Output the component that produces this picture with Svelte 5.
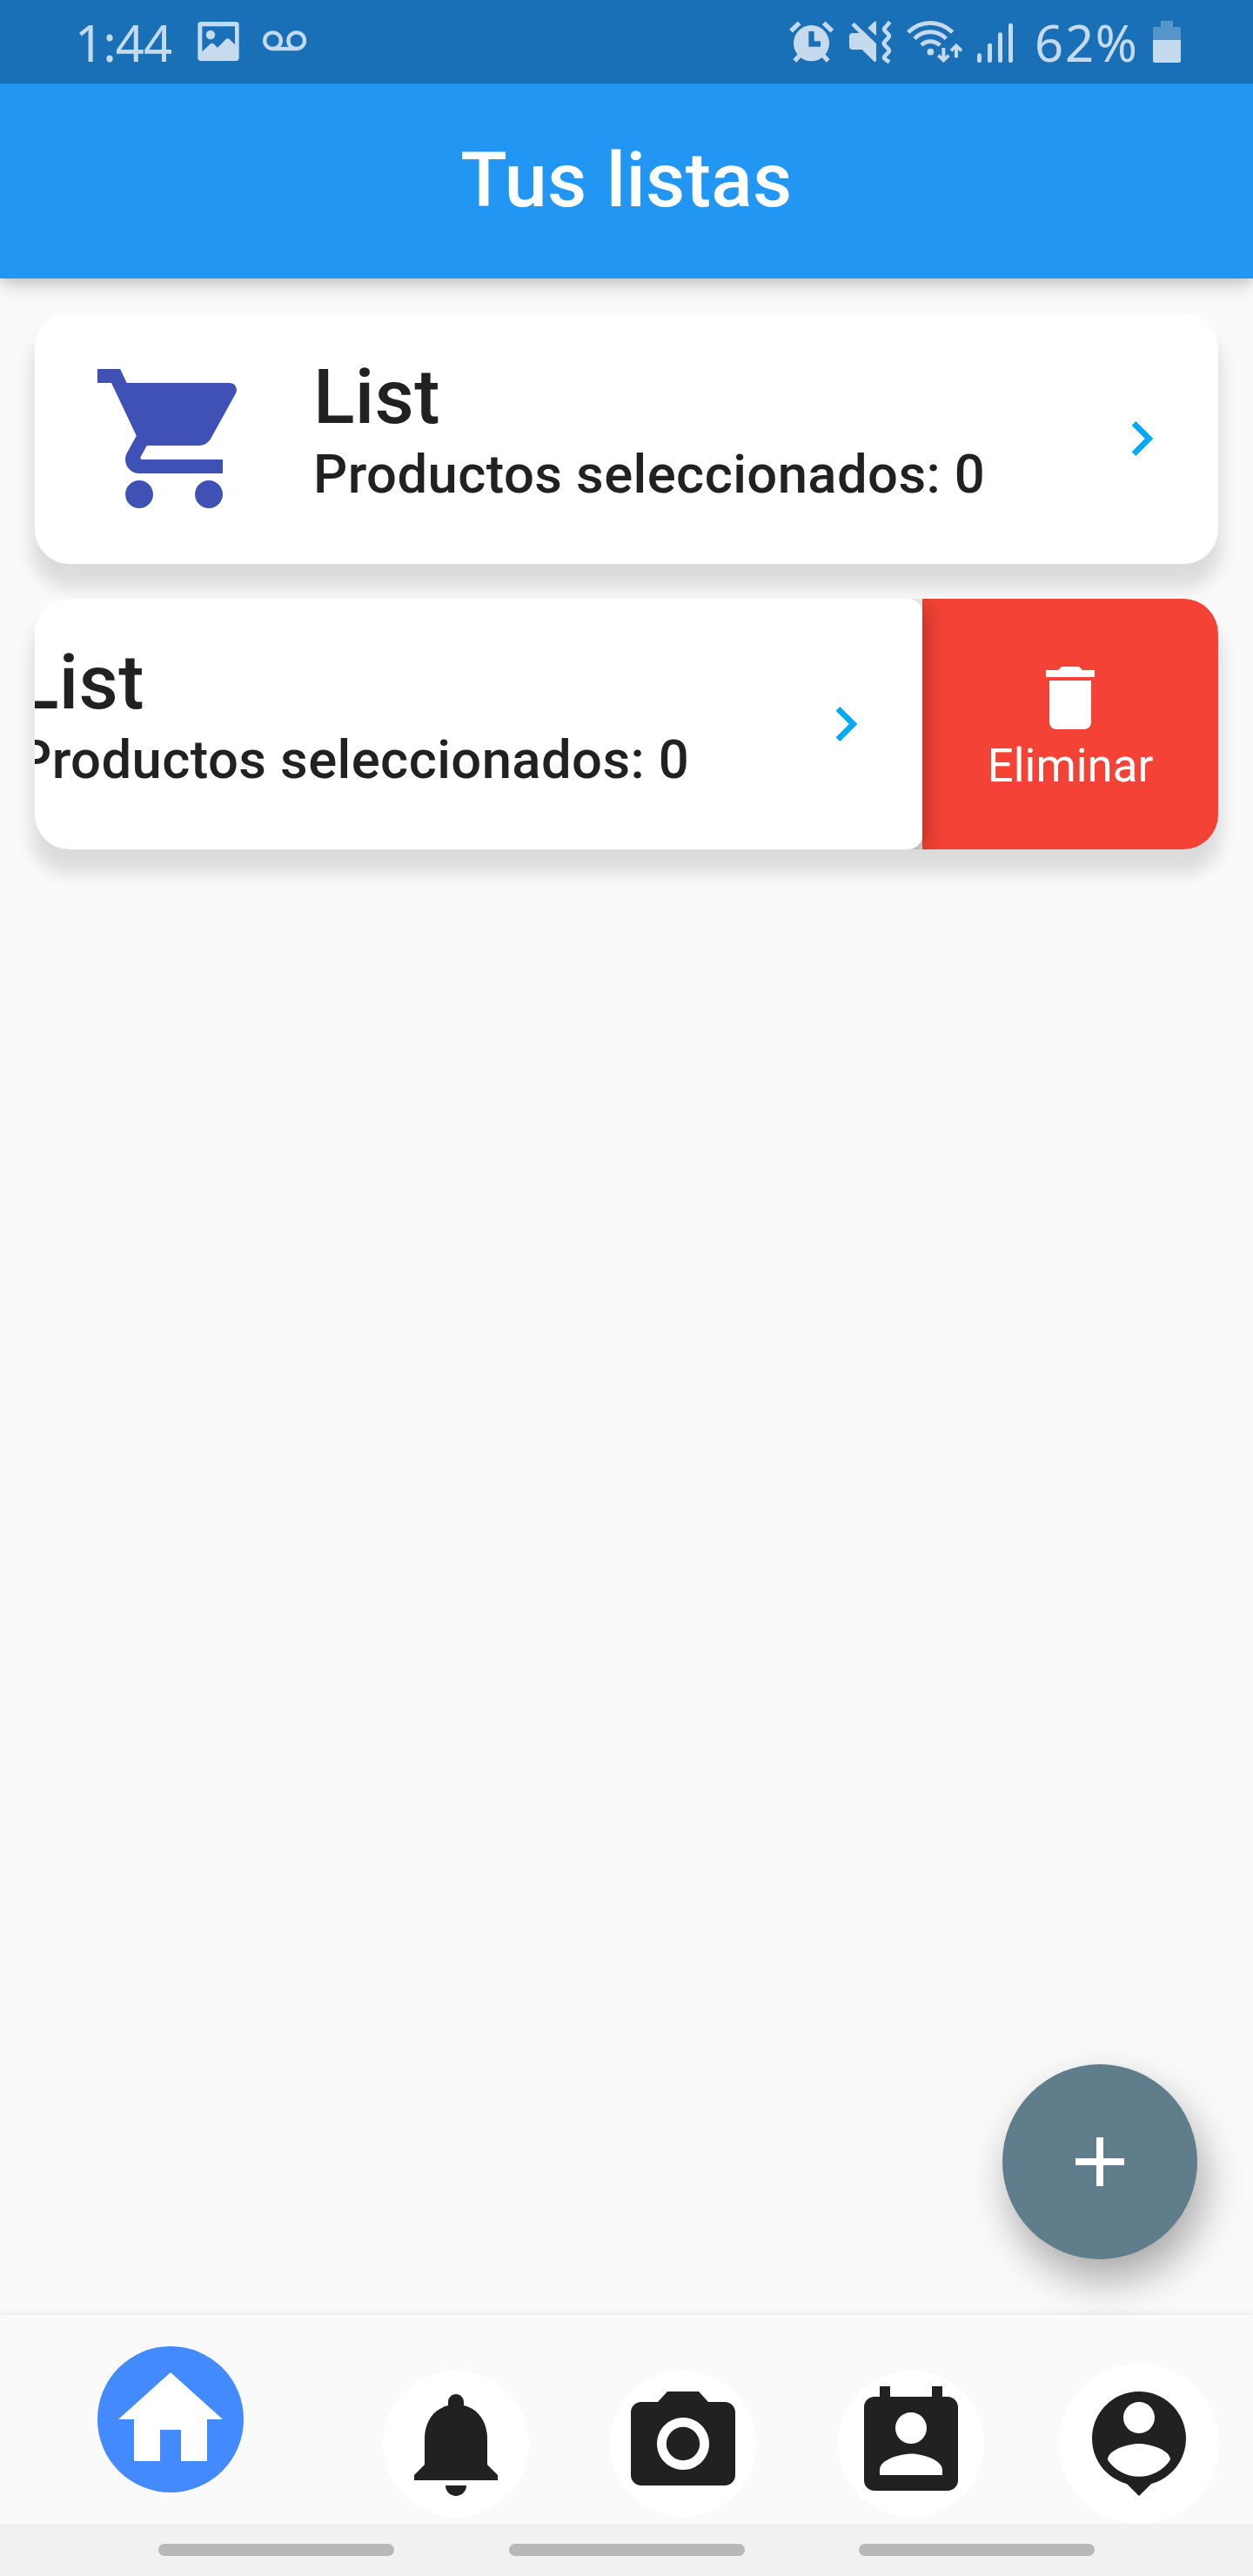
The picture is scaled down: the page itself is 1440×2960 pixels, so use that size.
<script>
  const lists = [
    { name: 'List', selected: 0, open: false },
    { name: 'List', selected: 0, open: true },
  ];

  const tabs = [
    {
      label: 'Notificaciones',
      path: 'M12 22c1.1 0 2-.9 2-2h-4c0 1.1.89 2 2 2zm6-6v-5c0-3.07-1.64-5.64-4.5-6.32V4c0-.83-.67-1.5-1.5-1.5s-1.5.67-1.5 1.5v.68C7.63 5.36 6 7.92 6 11v5l-2 2v1h16v-1l-2-2z',
    },
    {
      label: 'Cámara',
      path: 'M12 8.8a3.2 3.2 0 1 0 0 6.4 3.2 3.2 0 0 0 0-6.4zM9 2L7.17 4H4c-1.1 0-2 .9-2 2v12c0 1.1.9 2 2 2h16c1.1 0 2-.9 2-2V6c0-1.1-.9-2-2-2h-3.17L15 2H9zm3 15c-2.76 0-5-2.24-5-5s2.24-5 5-5 5 2.24 5 5-2.24 5-5 5z',
    },
    {
      label: 'Contactos',
      path: 'M19 3h-1V1h-2v2H8V1H6v2H5c-1.11 0-2 .9-2 2v14c0 1.1.89 2 2 2h14c1.1 0 2-.9 2-2V5c0-1.1-.9-2-2-2zm-7 3c1.66 0 3 1.34 3 3s-1.34 3-3 3-3-1.34-3-3 1.34-3 3-3zm6 12H6v-1c0-2 4-3.1 6-3.1s6 1.1 6 3.1v1z',
    },
    {
      label: 'Perfil',
      large: true,
      path: 'M12 2c-4.97 0-9 4.03-9 9 0 4.17 2.84 7.67 6.69 8.69L12 22l2.31-2.31C18.16 18.67 21 15.17 21 11c0-4.97-4.03-9-9-9zm0 2c1.66 0 3 1.34 3 3s-1.34 3-3 3-3-1.34-3-3 1.34-3 3-3zm0 14.3c-2.5 0-4.71-1.28-6-3.22.03-1.99 4-3.08 6-3.08 1.99 0 5.97 1.09 6 3.08-1.29 1.94-3.5 3.22-6 3.22z',
    },
  ];
</script>

<div class="screen">
  <header class="status">
    <span class="clock">1:44</span>
    <svg class="picture" viewBox="498 0 150 288" aria-hidden="true">
      <path fill-rule="evenodd" d="M513 75h120q11 0 11 11v113q0 11-11 11H513q-11 0-11-11V86q0-11 11-11zm4 16v87l27-26q7-6 14 0l12 12 29-29q6-5 12 0l19 19V91z" />
      <circle cx="546" cy="120" r="15.500" />
    </svg>
    <svg class="voicemail" viewBox="720 0 162 288" aria-hidden="true">
      <g fill="none" stroke="currentColor" stroke-width="13">
        <circle cx="760.500" cy="140" r="28" />
        <circle cx="842" cy="140" r="28" />
        <path d="M760 168h82" />
      </g>
    </svg>
    <span class="spacer"></span>
    <svg class="alarm" viewBox="48 0 162 288" aria-hidden="true">
      <path fill-rule="evenodd" d="M127.500 87a61.500 62 0 1 1 0 124a61.500 62 0 1 1 0-124zM118 108v53h41v-19h-22v-34z" />
      <g stroke="currentColor" stroke-width="16">
        <path d="M57 107l29-28M170 79l29 28M86 192l-16 18M169 192l16 18" />
      </g>
    </svg>
    <svg class="mute" viewBox="255 0 153 288" aria-hidden="true">
      <path d="M275 77l76 73v57q0 8-7 5l-42-41h-33q-11 0-11-11v-34q0-12 12-12h22l-27-27z" />
      <path d="M322 97l22-22q7-4 7 3v45z" />
      <path d="M398 76l-16 19q-6 5-2 10l13 14q5 6-1 12l-12 13q-5 6 0 11l12 13q6 6 1 12l-13 14q-4 5 2 10l14 10" fill="none" stroke="currentColor" stroke-width="14" />
    </svg>
    <svg class="wifi" viewBox="453 0 201 288" aria-hidden="true">
      <g fill="none" stroke="currentColor" stroke-width="14">
        <path d="M461 111Q495 79 537 79T614 111M483 133Q506 110 537 110T592 133M507 156Q519 143 537 143T571 156" />
      </g>
      <circle cx="538" cy="179" r="11.500" />
      <path d="M577 165h12v30l8-8 8 8-22 21-22-21 8-8 8 8zM621 199v-28l-8 8-8-8 22-22 22 22-8 8-8-8v28z" />
    </svg>
    <svg class="signal" viewBox="696 0 129 288" aria-hidden="true">
      <rect x="699" y="184" width="15" height="32" rx="7" />
      <rect x="735" y="149" width="15" height="67" rx="7" />
      <rect x="771" y="112" width="15" height="104" rx="7" />
      <rect x="807" y="80" width="15" height="136" rx="7" />
    </svg>
    <span class="percent">62%</span>
    <svg class="battery" viewBox="1302 0 102 288" aria-hidden="true">
      <path opacity=".35" d="M1332 72h42v21h21q6 0 6 6v39h-96V99q0-6 6-6h21z" />
      <path d="M1305 138h96v72q0 6-6 6h-84q-6 0-6-6z" />
    </svg>
  </header>

  <div class="appbar"><h1>Tus listas</h1></div>

  <main>
    {#each lists as list}
      <article class="slot">
        <div class="clip">
          <div class="tile" class:open={list.open}>
            <svg class="cart" viewBox="0 0 24 24" aria-hidden="true">
              <path d="M7 18c-1.1 0-1.990.9-1.990 2S5.900 22 7 22s2-.9 2-2-.9-2-2-2zM1 2v2h2l3.600 7.590-1.350 2.450c-.16.280-.250.610-.250.960 0 1.100.9 2 2 2h12v-2H7.420c-.14 0-.250-.110-.250-.250l.030-.120.9-1.630h7.450c.750 0 1.410-.410 1.750-1.030l3.580-6.490c.080-.140.120-.310.120-.480 0-.550-.450-1-1-1H5.210l-.940-2H1zm16 16c-1.100 0-1.990.9-1.990 2s.890 2 1.990 2 2-.9 2-2-.9-2-2-2z" />
            </svg>
            <div class="info">
              <h2>{list.name}</h2>
              <p>Productos seleccionados: {list.selected}</p>
            </div>
            <svg class="chevron" viewBox="0 0 24 24" aria-hidden="true">
              <path d="M10 6L8.590 7.410 13.170 12l-4.580 4.590L10 18l6-6z" />
            </svg>
          </div>
          {#if list.open}
            <button class="delete">
              <svg viewBox="0 0 24 24" aria-hidden="true">
                <path d="M6 19c0 1.100.9 2 2 2h8c1.100 0 2-.9 2-2V7H6v12zM19 4h-3.500l-1-1h-5l-1 1H5v2h14V4z" />
              </svg>
              <span>Eliminar</span>
            </button>
          {/if}
        </div>
      </article>
    {/each}
    <button class="fab" aria-label="Añadir lista">
      <svg viewBox="0 0 24 24" aria-hidden="true"><path d="M19 13h-6v6h-2v-6H5v-2h6V5h2v6h6v2z" /></svg>
    </button>
  </main>

  <nav class="tabs">
    <button class="tab active" aria-label="Inicio">
      <span class="disc">
        <svg viewBox="0 0 24 24" aria-hidden="true"><path d="M10 20v-6h4v6h5v-8h3L12 3 2 12h3v8z" /></svg>
      </span>
    </button>
    {#each tabs as tab}
      <button class="tab" aria-label={tab.label}>
        <span class="disc" class:large={tab.large}>
          <svg viewBox="0 0 24 24" aria-hidden="true"><path d={tab.path} /></svg>
        </span>
      </button>
    {/each}
  </nav>

  <footer class="system"><span></span><span></span><span></span></footer>
</div>

<style>
  :global(body) {
    margin: 0;
  }

  .screen {
    display: flex;
    flex-direction: column;
    width: 1440px;
    height: 2960px;
    overflow: hidden;
    background: #fafafa;
    color: #212121;
    font-family: Roboto, sans-serif;
  }

  svg {
    display: block;
    flex: none;
    fill: currentColor;
  }

  button {
    padding: 0;
    border: 0;
    background: none;
    color: inherit;
    font: inherit;
  }

  h1,
  h2,
  p {
    margin: 0;
    font-weight: 500;
  }

  .status {
    display: flex;
    box-sizing: border-box;
    flex: none;
    height: 96px;
    padding: 0 82px 0 86px;
    background: #1a70b7;
    color: #c5daec;
    font: 58px/97px 'Noto Sans', sans-serif;
    position: relative;
    z-index: 3;
  }

  .status svg {
    height: 96px;
  }

  .clock {
    width: 140px;
    letter-spacing: -1px;
  }

  .picture {
    width: 50px;
    margin-right: 24px;
  }

  .voicemail {
    width: 54px;
  }

  .spacer {
    flex: 1;
  }

  .alarm {
    width: 54px;
    margin-right: 15px;
  }

  .mute {
    width: 51px;
    margin-right: 15px;
  }

  .wifi {
    width: 67px;
    margin-right: 14px;
  }

  .signal {
    width: 43px;
  }

  .percent {
    width: 135px;
    margin-left: 24px;
    letter-spacing: 1.7px;
  }

  .battery {
    width: 34px;
  }

  .appbar {
    display: flex;
    box-sizing: border-box;
    flex: none;
    align-items: center;
    justify-content: center;
    height: 224px;
    padding-bottom: 3px;
    background: #2196f3;
    color: #fff;
    box-shadow: 0 8px 20px rgba(0, 0, 0, 0.18), 0 2px 12px rgba(0, 0, 0, 0.08);
  }

  h1 {
    font-size: 88px;
    line-height: 104px;
    letter-spacing: 0.3px;
  }

  main {
    display: flex;
    flex: 1;
    flex-direction: column;
    gap: 40px;
    padding: 40px;
  }

  .slot {
    height: 288px;
    border-radius: 40px;
    box-shadow: 0 24px 20px 4px rgba(0, 0, 0, 0.12);
  }

  .clip {
    display: flex;
    justify-content: flex-end;
    height: 100%;
    overflow: hidden;
    border-radius: 40px;
    background: linear-gradient(#fafafa, #dcdcdc);
  }

  .tile {
    display: flex;
    flex: none;
    align-items: center;
    box-sizing: border-box;
    width: 1360px;
    padding: 0 48px 0 64px;
    background: #fff;
  }

  .tile.open {
    border-radius: 16px;
    box-shadow: 0 4px 30px rgba(0, 0, 0, 0.37);
    z-index: 1;
  }

  .cart {
    width: 192px;
    height: 192px;
    margin-right: 64px;
    color: #3f51b5;
  }

  .info {
    flex: 1;
    padding-bottom: 21px;
  }

  h2 {
    font-size: 88px;
    line-height: 104px;
    letter-spacing: 0.3px;
  }

  p {
    font-size: 61.6px;
    line-height: 75px;
    letter-spacing: 0.4px;
    white-space: nowrap;
  }

  .chevron {
    width: 80px;
    height: 80px;
    color: #03a9f4;
  }

  .delete {
    display: flex;
    flex: none;
    flex-direction: column;
    align-items: center;
    justify-content: center;
    width: 340px;
    background: #f44336;
    color: #fff;
    font-size: 52.8px;
    line-height: 60px;
  }

  .delete svg {
    width: 96px;
    height: 96px;
  }

  .fab {
    display: flex;
    align-items: center;
    justify-content: center;
    align-self: flex-end;
    width: 224px;
    height: 224px;
    margin: auto 24px 24px 0;
    border-radius: 50%;
    background: #607d8b;
    color: #fff;
    box-shadow: 8px 24px 48px rgba(0, 0, 0, 0.33);
  }

  .fab svg {
    width: 96px;
    height: 96px;
  }

  .tabs {
    display: grid;
    flex: none;
    grid-template-columns: 1.5fr repeat(4, 1fr);
    height: 240px;
    background: #fafafa;
    box-shadow: 0 0 10px rgba(0, 0, 0, 0.1);
  }

  .tab {
    display: flex;
    align-items: flex-end;
    justify-content: center;
    padding-bottom: 8px;
  }

  .tab.active {
    padding-bottom: 36px;
  }

  .tab:last-child {
    padding-bottom: 0;
  }

  .disc {
    display: flex;
    flex: none;
    align-items: center;
    justify-content: center;
    width: 168px;
    height: 168px;
    border-radius: 50%;
    background: #fff;
  }

  .disc.large {
    width: 184px;
    height: 184px;
  }

  .active .disc {
    background: #448aff;
    color: #fff;
  }

  .disc svg {
    width: 144px;
    height: 144px;
  }

  .system {
    display: flex;
    flex: none;
    align-items: center;
    justify-content: center;
    gap: 131.500px;
    height: 60px;
    background: #f1f1f1;
    z-index: 1;
  }

  .system span {
    width: 271px;
    height: 14px;
    border-radius: 7px;
    background: #b8b8b8;
  }
</style>
